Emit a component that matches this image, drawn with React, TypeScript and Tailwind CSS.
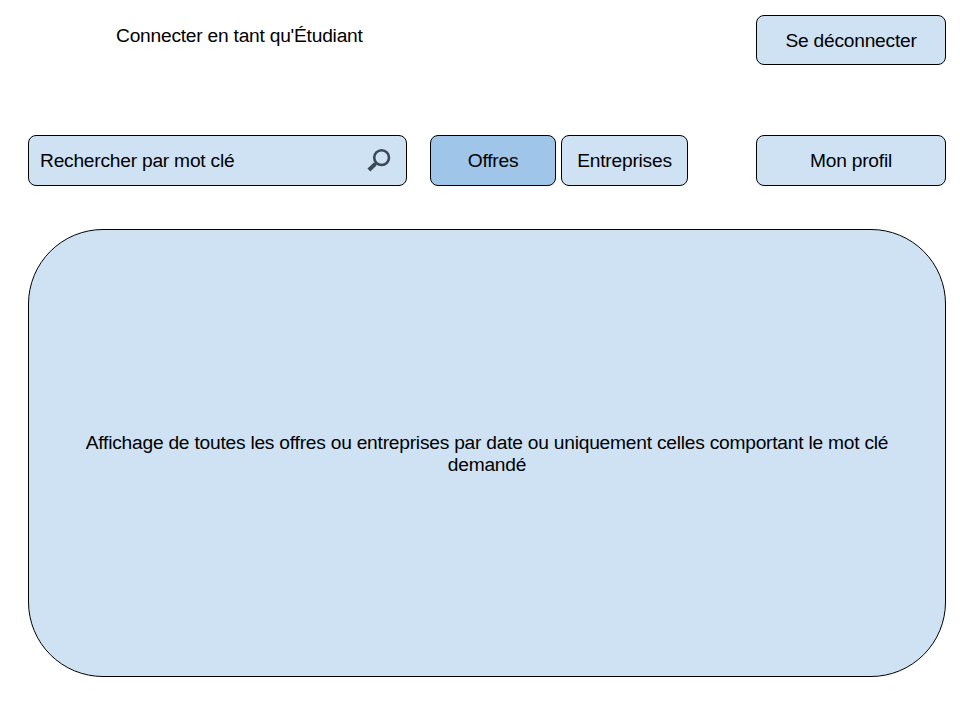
import React from "react";

function Box({ className, children }: { className: string; children: React.ReactNode }) {
  return (
    <button type="button" className={`flex shrink-0 items-center rounded-[8px] border border-black pt-px ${className}`}>
      {children}
    </button>
  );
}

function Magnifier() {
  return (
    <svg width="26" height="26" viewBox="0 0 26 26" fill="none" stroke="#3c4856">
      <circle cx="14.6" cy="9.6" r="7.4" strokeWidth="2.6" />
      <path d="M9.4 14.8 L7.6 16.6" strokeWidth="2.8" />
      <path d="M8.2 16 L1.9 22" strokeWidth="4" />
    </svg>
  );
}

export default function App() {
  return (
    <div className="flex h-[720px] w-[960px] flex-col overflow-hidden bg-white pl-7 pr-[14px] pt-[15px] font-['Liberation_Sans',Arial,sans-serif] text-[19.2px] leading-[22px] tracking-[-0.23px] text-black">
      <header className="flex h-[50px] shrink-0 items-start justify-between pl-[88px]">
        <p className="pt-[10px]">Connecter en tant qu'Étudiant</p>
        <Box className="h-[50px] w-[190px] justify-center bg-[#cfe2f3]">Se déconnecter</Box>
      </header>
      <nav className="mt-[70px] flex h-[51px] shrink-0">
        <Box className="w-[379px] justify-between bg-[#cfe2f3] pl-[11px] pr-[13px]">
          <span>Rechercher par mot clé</span>
          <Magnifier />
        </Box>
        <Box className="ml-[23px] w-[126px] justify-center bg-[#9fc5e8]">Offres</Box>
        <Box className="ml-[5px] w-[127px] justify-center bg-[#cfe2f3]">Entreprises</Box>
        <Box className="ml-auto w-[190px] justify-center bg-[#cfe2f3]">Mon profil</Box>
      </nav>
      <main className="mt-[43px] flex h-[448px] shrink-0 items-center justify-center rounded-[75px] border border-black bg-[#cfe2f3] pt-[2px] text-center">
        <p>
          Affichage de toutes les offres ou entreprises par date ou uniquement celles comportant le mot clé
          <br />
          demandé
        </p>
      </main>
    </div>
  );
}
